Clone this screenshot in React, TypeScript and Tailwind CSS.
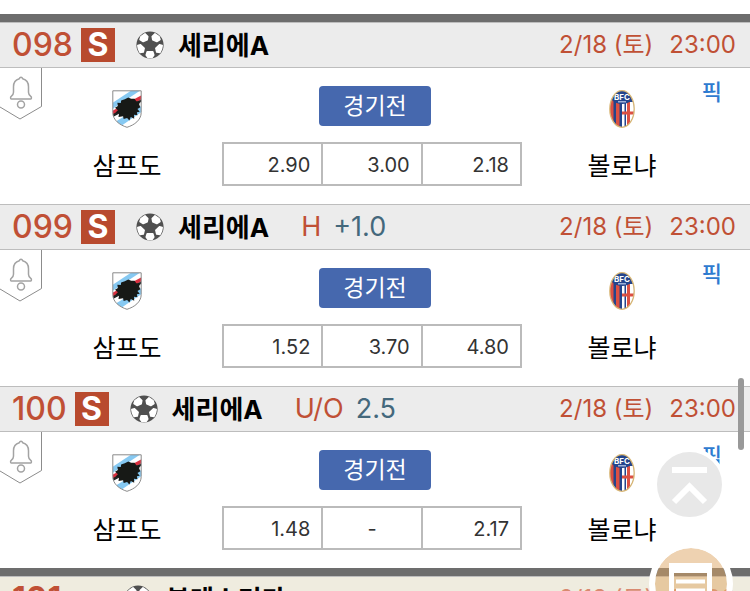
import type { ReactNode } from "react";

type Match = {
  no: string;
  mark?: string;
  line?: string;
  odds: [string, string, string];
};

const matches: Match[] = [
  { no: "098", odds: ["2.90", "3.00", "2.18"] },
  { no: "099", mark: "H", line: "+1.0", odds: ["1.52", "3.70", "4.80"] },
  { no: "100", mark: "U/O", line: "2.5", odds: ["1.48", "-", "2.17"] },
];

function Ball() {
  return (
    <svg viewBox="0 0 28 28" className="size-7 shrink-0" aria-hidden="true">
      <circle cx="14" cy="14" r="13.600" fill="#505050" />
      <g fill="#fff" stroke="#fff" strokeWidth="1.500" strokeLinejoin="round">
        <path d="M5 5.500 9 2.800l2.800 2.700-.6 3.300-4 1.800-3.200-2Z" />
        <path d="M23 5.500 19 2.800l-2.800 2.700.6 3.300 4 1.800 3.200-2Z" />
        <path d="m1.800 14.500 2.700-.8 3.700 3.500-.9 3.800-3.300.4c-1.300-2-2.100-4.300-2.200-6.900Z" />
        <path d="m26.200 14.500-2.700-.8-3.700 3.500.9 3.800 3.300.4c1.300-2 2.100-4.300 2.200-6.900Z" />
        <path d="M11.200 20.800h5.600l1 3.200-1.600 2.400h-4.400L10.200 24Z" />
      </g>
    </svg>
  );
}

function SampCrest() {
  return (
    <svg viewBox="0 0 30 38" className="h-[38px] w-[30px]" aria-hidden="true">
      <defs>
        <clipPath id="shield">
          <path d="M.8.8h28.400v21.700C29.200 30 22.500 35 15 37.300 7.500 35 .8 30 .8 22.500Z" />
        </clipPath>
      </defs>
      <g clipPath="url(#shield)">
        <path fill="#fff" d="M0 0h30v38H0z" />
        <path fill="#86c9f2" d="M-1 14 20 0h9L-1 20Z" />
        <path fill="#86c9f2" d="M3 32 31 15v6L9 36Z" />
        <path fill="#d9303f" d="M-1 21.500 31 4.500v4L-1 26Z" />
        <path fill="#222" d="M-1 25 31 8.500v2.500L-1 28Z" />
      </g>
      <g transform="translate(-1 0) scale(1.150)">
        <path
          fill="#171916"
          d="m12 8 3-1.500 2.500 1 3 .2 1.500 2 3.200.3-.7 2.500 1 2.500-2.500 1.500 2 2.500-2.500.4.5 2.600-3-.5.2 3.500-3-1.500-1.200 3-2-2.200-3 1-.5-2.500-4 .7.500-3-3-1 2-2-2.500-2 2.500-1.500-.5-3 3 .2.300-2Z"
        />
      </g>
      <path fill="none" stroke="#8a8a8a" d="M.8.8h28.400v21.700C29.200 30 22.500 35 15 37.300 7.500 35 .8 30 .8 22.500Z" />
    </svg>
  );
}

function BolognaCrest() {
  return (
    <svg viewBox="0 0 26 38" className="h-[38px] w-[26px]" aria-hidden="true">
      <defs>
        <clipPath id="oval">
          <ellipse cx="13" cy="19" rx="12" ry="18" />
        </clipPath>
      </defs>
      <g clipPath="url(#oval)">
        <path fill="#24458c" d="M0 0h26v38H0z" />
        <path fill="#dc5043" d="M1 10h3.500v28H1zM7 12h3.500v26H7z" />
        <path fill="#fff" d="M13 12h13v26H13z" />
        <path fill="#24458c" d="M15.500 12h1.500v26h-1.500z" />
        <path fill="#dc5043" d="M18 12h3v26h-3zM13 21.500h13v3H13z" />
        <path fill="#24458c" d="M3 0h20v10q-4 4-10 4T3 10Z" />
        <text x="13" y="9.500" textAnchor="middle" fontSize="8" fontWeight="700" fill="#fff" fontFamily="Inter, sans-serif">
          BFC
        </text>
        <path stroke="#9db0d8" strokeWidth="1.500" d="M9 11.800h8" />
      </g>
      <ellipse cx="13" cy="19" rx="12.200" ry="18.300" fill="none" stroke="#d8b674" strokeWidth="1.300" />
    </svg>
  );
}

function AlarmTag() {
  return (
    <button type="button" aria-label="알림" className="absolute top-0 left-0">
      <svg viewBox="0 0 42 52" className="h-[52px] w-[42px]" fill="none" aria-hidden="true">
        <path d="M41.500 0v38.500L20 51 0 39" stroke="#8c8c8c" />
        <g stroke="#a3a3a3" strokeWidth="1.500">
          <path d="M21 9.200c-.8 0-1.400.6-1.700 1.500-3.800 1-5.800 4-5.800 8v5.500c0 2-.8 3.300-2.500 4.500-.6.500-.6 2.300.2 2.300h19.600c.8 0 .8-1.800.2-2.300-1.700-1.200-2.500-2.500-2.500-4.500v-5.500c0-4-2-7-5.800-8-.3-.9-.9-1.500-1.700-1.500Z" />
          <circle cx="21" cy="36.500" r="3.500" />
        </g>
      </svg>
    </button>
  );
}

function Team({ name, children }: { name: string; children: ReactNode }) {
  return (
    <div className="flex flex-col items-center gap-[22px]">
      {children}
      <span className="text-[25px] leading-8 text-black">{name}</span>
    </div>
  );
}

function KickOff({ className }: { className: string }) {
  return (
    <div className={`ml-auto flex gap-4 pr-[14px] text-2xl whitespace-nowrap ${className}`}>
      <span>2/18 (토)</span>
      <span>23:00</span>
    </div>
  );
}

function MatchRow({ match }: { match: Match }) {
  return (
    <section>
      <header className="flex h-[46px] items-center border-y border-[#bdbdbd] bg-[#ececec] pl-3">
        <span className="text-[32px] font-medium text-[#c05035]">{match.no}</span>
        <span className="ml-2 flex size-[34px] items-center justify-center bg-[#b84a2e] text-[32px] font-bold text-white">
          S
        </span>
        <div className="ml-[21px] flex items-center gap-[14px]">
          <Ball />
          <h2 className="text-[26px] font-bold text-black">세리에A</h2>
        </div>
        {match.mark && (
          <p className="ml-8 flex gap-3 text-[27px]">
            <span className="text-[#c05035]">{match.mark}</span>
            <span className="text-[#44687c]">{match.line}</span>
          </p>
        )}
        <KickOff className="text-[#c05035]" />
      </header>
      <div className="relative grid grid-cols-[1fr_300px_1fr] pt-[18px] pr-[6px] pb-4">
        <AlarmTag />
        <div className="pt-1 pl-8">
          <Team name="삼프도">
            <SampCrest />
          </Team>
        </div>
        <div className="flex flex-col items-center gap-4 pb-[2px]">
          <button type="button" className="ml-[6px] h-10 w-28 rounded bg-[#4668ae] text-[23px] text-white">
            경기전
          </button>
          <table className="h-11 w-full table-fixed border-collapse">
            <tbody>
              <tr>
                {match.odds.map((odd, i) => (
                  <td
                    key={i}
                    className={`border-2 border-[#bbbbbb] pt-[2px] text-[20px] text-[#333] ${
                      odd === "-" ? "text-center" : "pr-[11px] text-right"
                    }`}
                  >
                    {odd}
                  </td>
                ))}
              </tr>
            </tbody>
          </table>
        </div>
        <div className="pt-1 pr-[22px]">
          <Team name="볼로냐">
            <BolognaCrest />
          </Team>
        </div>
        <a href="#pick" className="absolute top-2 right-7 text-[22px] leading-8 font-medium text-[#2f7bd0]">
          픽
        </a>
      </div>
    </section>
  );
}

export default function App() {
  return (
    <main className="relative h-screen overflow-hidden bg-white pt-[14px] font-['Inter','Noto_Sans_CJK_KR',sans-serif]">
      <div className="h-2 bg-[#6d6d6d]" />
      {matches.map((m) => (
        <MatchRow key={m.no} match={m} />
      ))}
      <div className="h-2 bg-[#6d6d6d]" />
      <header className="flex h-[46px] items-center border-y border-[#bdbdbd] bg-[#efecdf] pl-3">
        <span className="w-28 text-[32px] font-bold text-[#c05035]">101</span>
        <div className="flex items-center gap-[14px]">
          <Ball />
          <h2 className="text-[26px] font-bold text-black">분데스리가</h2>
        </div>
        <KickOff className="text-[#d98a70]" />
      </header>

      <div className="fixed top-[378px] right-[6px] h-[72px] w-[6px] rounded-full bg-[#999]" />
      <button
        type="button"
        aria-label="맨 위로"
        className="fixed right-6 bottom-[70px] size-[73px] rounded-full border-4 border-white bg-[#e8e8e8]"
      >
        <svg viewBox="0 0 65 65" className="size-full" fill="none" stroke="#fff" strokeWidth="6" aria-hidden="true">
          <path d="M15 18h35M17 50l15.500-15.500L48 50" />
        </svg>
      </button>
      <button
        type="button"
        aria-label="구매 목록"
        className="fixed right-[17px] -bottom-[35px] size-[84px] rounded-full border-6 border-white bg-[#dea564]/50 bg-clip-padding"
      >
        <svg viewBox="0 0 72 72" className="size-full" fill="none" stroke="#fff" aria-hidden="true">
          <path strokeWidth="5" d="M16.500 16v41h38V16" />
          <path strokeWidth="10" d="M14 20h43" />
          <path strokeWidth="4" d="M21 33.500h29M21 42.500h29M21 50.500h18" />
        </svg>
      </button>
    </main>
  );
}
